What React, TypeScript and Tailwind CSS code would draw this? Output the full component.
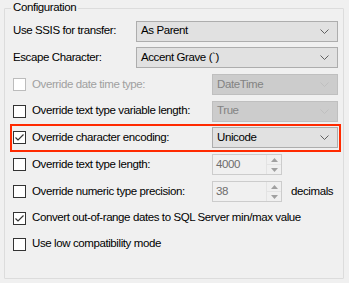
import React from 'react';

const Chevron: React.FC<{ disabled?: boolean }> = ({ disabled }) => (
  <svg width="9" height="5" viewBox="0 0 9 5" className="shrink-0">
    <path d="M0.5 0.5 L4.5 4.5 L8.5 0.5" fill="none" stroke={disabled ? '#bfbfbf' : '#606060'} strokeWidth="1" />
  </svg>
);

const Combo: React.FC<{ value: string; disabled?: boolean; className?: string }> = ({ value, disabled, className }) => (
  <div
    className={
      'flex h-[21px] items-center justify-between border pl-[4px] pr-[8px] ' +
      (disabled ? 'border-[#bfbfbf] bg-[#cccccc] text-[#838383] ' : 'border-[#adadad] bg-[#e1e1e1] text-black ') +
      (className ?? '')
    }
  >
    <span>{value}</span>
    <Chevron disabled={disabled} />
  </div>
);

const Spin: React.FC<{ value: string }> = ({ value }) => (
  <div className="flex h-[21px] w-[70px] border border-[#cccccc] bg-[#f0f0f0]">
    <span className="flex-1 pl-[3px] leading-[19px] text-[#6d6d6d]">{value}</span>
    <div className="flex w-[15px] flex-col border-l border-[#e3e3e3]">
      <div className="flex flex-1 items-center justify-center">
        <svg width="7" height="4" viewBox="0 0 7 4"><path d="M3.5 0 L7 4 L0 4 Z" fill="#a0a0a0" /></svg>
      </div>
      <div className="flex flex-1 items-center justify-center border-t border-[#e3e3e3]">
        <svg width="7" height="4" viewBox="0 0 7 4"><path d="M0 0 L7 0 L3.5 4 Z" fill="#a0a0a0" /></svg>
      </div>
    </div>
  </div>
);

const Check: React.FC<{ checked?: boolean; disabled?: boolean }> = ({ checked, disabled }) => (
  <div
    className={
      'flex h-[13px] w-[13px] shrink-0 items-center justify-center border bg-white ' +
      (disabled ? 'border-[#bcbcbc]' : 'border-[#333333]')
    }
  >
    {checked && (
      <svg width="11" height="11" viewBox="0 0 11 11">
        <path d="M1.5 5.5 L4 8 L9.5 2.5" fill="none" stroke="#333333" strokeWidth="1.2" />
      </svg>
    )}
  </div>
);

const CheckLabel: React.FC<{ label: string; checked?: boolean; disabled?: boolean }> = ({ label, checked, disabled }) => (
  <div className="flex items-center gap-[6px]">
    <Check checked={checked} disabled={disabled} />
    <span className={disabled ? 'text-[#a0a0a0]' : 'text-black'}>{label}</span>
  </div>
);

const App: React.FC = () => {
  return (
    <div
      className="h-[283px] w-[349px] overflow-hidden bg-[#f0f0f0] pl-[4px] pt-[8px] text-[11.5px] leading-none tracking-[-0.4px]"
      style={{ fontFamily: '"Liberation Sans", Arial, sans-serif' }}
    >
      <div className="relative h-[271px] w-[340px] rounded-[1px] border border-[#dcdcdc] pl-[8px] pr-[5px] pt-[9px]">
        <span className="absolute left-[6px] top-[-7px] bg-[#f0f0f0] px-[2px] text-black">Configuration</span>

        <div className="flex h-[26px] items-center">
          <span className="w-[123px]">Use SSIS for transfer:</span>
          <Combo value="As Parent" className="w-[202px]" />
        </div>
        <div className="flex h-[27px] items-center">
          <span className="w-[123px]">Escape Character:</span>
          <Combo value="Accent Grave (`)" className="w-[202px]" />
        </div>
        <div className="flex h-[27px] items-center justify-between">
          <CheckLabel label="Override date time type:" disabled />
          <Combo value="DateTime" disabled className="w-[126px]" />
        </div>
        <div className="flex h-[26px] items-center justify-between">
          <CheckLabel label="Override text type variable length:" />
          <Combo value="True" disabled className="w-[126px]" />
        </div>
        <div className="relative flex h-[27px] items-center justify-between">
          <div className="pointer-events-none absolute bottom-[-1px] left-[-3px] right-[-3px] top-[0px] border-2 border-[#ff2a00]" />
          <CheckLabel label="Override character encoding:" checked />
          <Combo value="Unicode" className="w-[126px]" />
        </div>
        <div className="flex h-[27px] items-center">
          <div className="w-[199px]">
            <CheckLabel label="Override text type length:" />
          </div>
          <Spin value="4000" />
        </div>
        <div className="flex h-[27px] items-center">
          <div className="w-[199px]">
            <CheckLabel label="Override numeric type precision:" />
          </div>
          <Spin value="38" />
          <span className="ml-[9px]">decimals</span>
        </div>
        <div className="flex h-[26px] items-center">
          <CheckLabel label="Convert out-of-range dates to SQL Server min/max value" checked />
        </div>
        <div className="flex h-[26px] items-center">
          <CheckLabel label="Use low compatibility mode" />
        </div>
      </div>
    </div>
  );
};

export default App;
